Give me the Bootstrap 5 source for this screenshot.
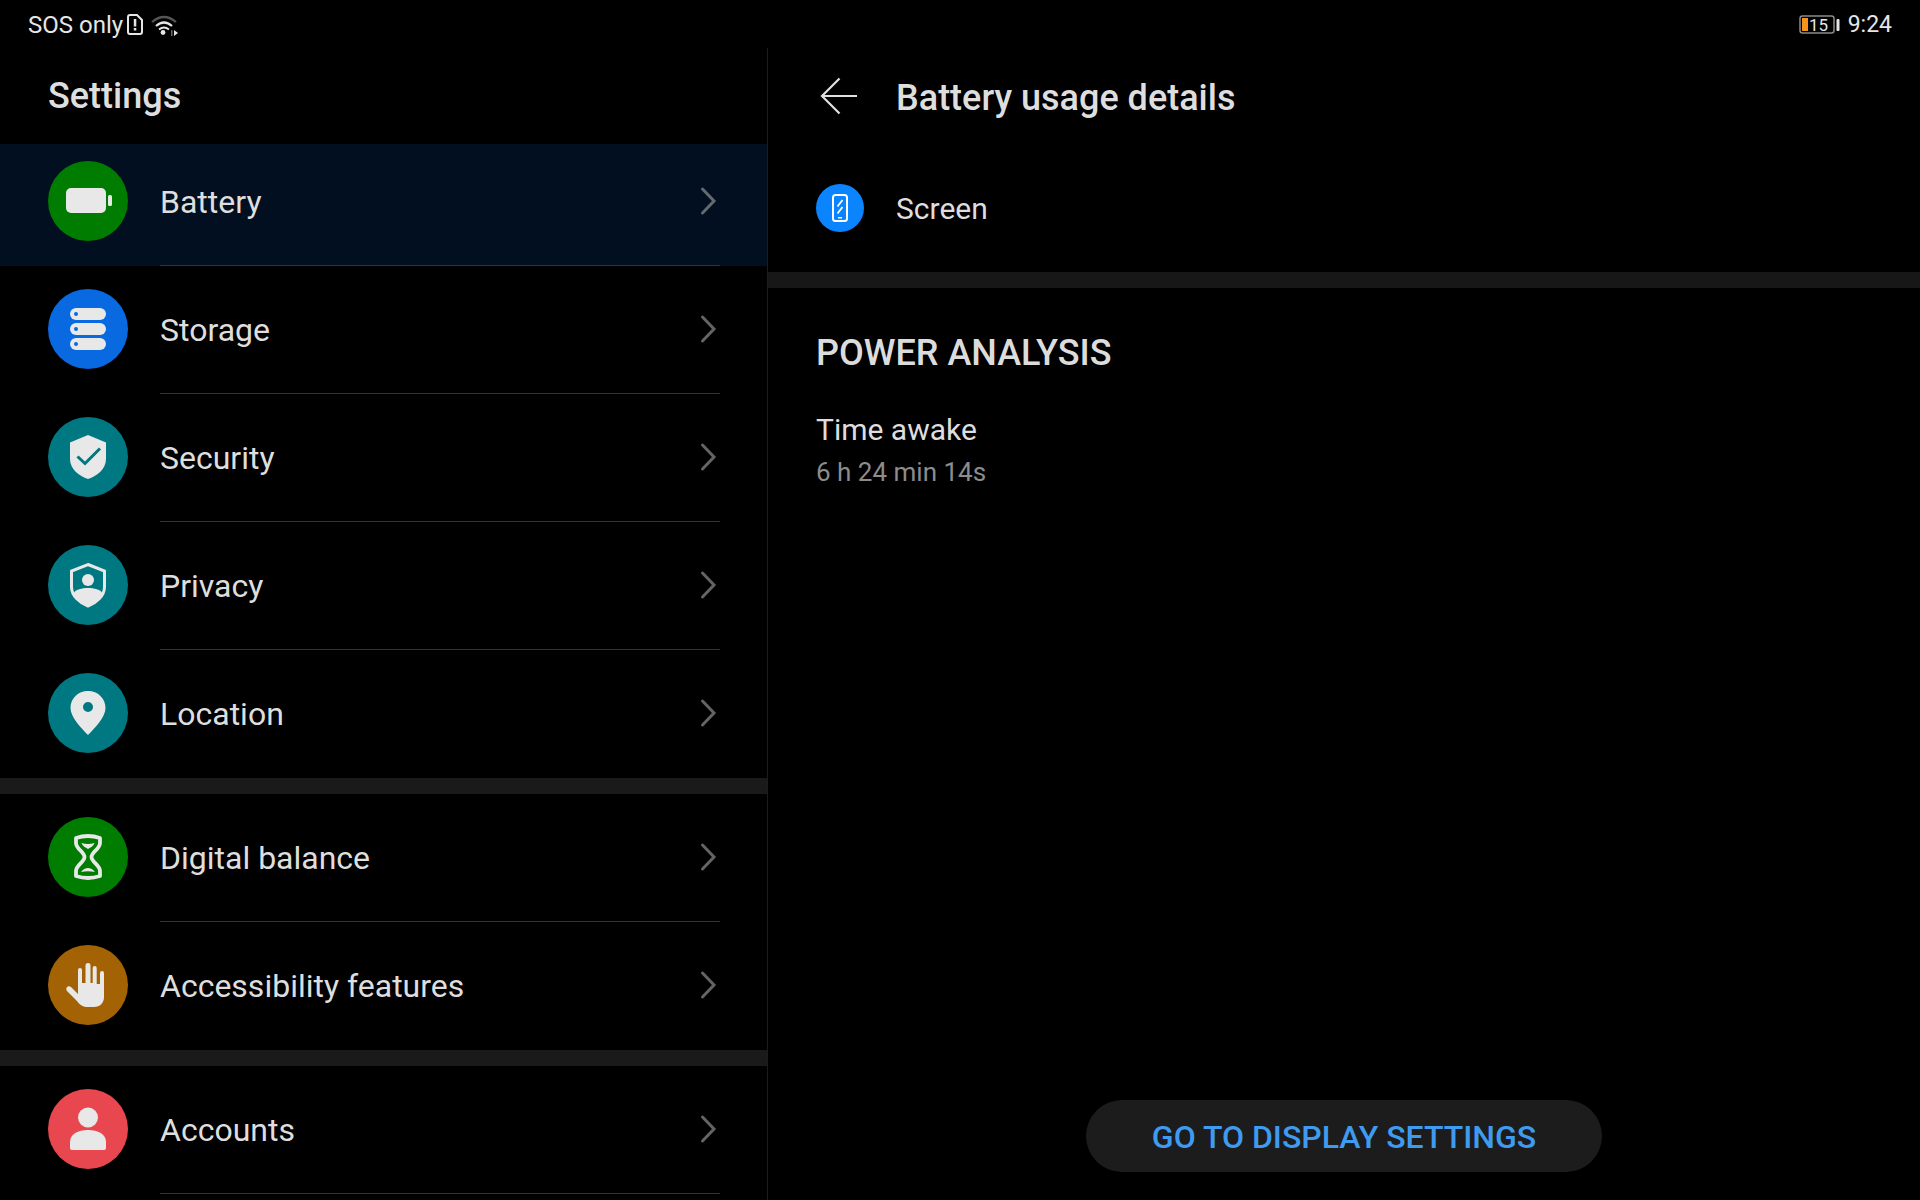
<!DOCTYPE html>
<html lang="en">
<head>
<meta charset="utf-8">
<title>Battery usage details</title>
<link rel="stylesheet" href="https://cdn.jsdelivr.net/npm/bootstrap@5.3.0/dist/css/bootstrap.min.css">
<style>
html,body{height:100%;background:#000;}
body{font-family:Roboto,"Liberation Sans",sans-serif;color:#dedede;overflow:hidden;}
.shell{height:1200px;width:1920px;}
.statusbar{height:48px;padding:2px 28px 0;font-size:24px;color:#e6e6e6;}
.sb-gap{gap:3px;}
.sb-wifi{margin-left:2px;}
.sb-time{font-size:23px;margin-left:7px;}
.panes{height:1152px;}
.leftpane{width:768px;border-right:1px solid #1c1c1c;overflow:hidden;}
.rightpane{width:1152px;}
.pane-title{height:96px;padding:0 48px 1px;font-size:36px;font-weight:500;color:#dedede;}
.setrow{height:128px;padding-left:48px;}
.setrow .disc{margin-bottom:2px;}
.setrow .chev{margin-bottom:2px;}
.setrow.active-row{background:#020f20;height:122px;}
.active-row .disc{margin-bottom:9px;}
.active-row .rowbody{padding-bottom:6px;}
.rowbody{height:100%;margin-left:32px;margin-right:47px;border-bottom:1px solid #333;font-size:32px;}
.rowbody.nodiv{border-bottom:0;}
.disc{width:80px;height:80px;border-radius:50%;flex:none;}
.sect-gap{height:16px;background:#1a1a1a;}
.sect-gap.dim{background:#171717;}
.c-green{background:#007d00;}
.c-blue{background:#0869e0;}
.c-teal{background:#007882;}
.c-amber{background:#a36304;}
.c-red{background:#e9474f;}
.detail-head{height:96px;padding-left:48px;}
.detail-title{font-size:36px;font-weight:500;margin-left:36px;margin-top:3px;}
.screen-row{height:128px;padding-left:48px;}
.screen-disc{width:48px;height:48px;border-radius:50%;background:#0a84ff;flex:none;}
.screen-label{font-size:30px;margin-left:32px;}
.pa-block{padding:45px 48px 0;}
.pa-title{font-size:36px;font-weight:500;line-height:41px;color:#dcdcdc;}
.pa-item{font-size:30px;line-height:36px;margin-top:38px;}
.pa-sub{font-size:26px;line-height:32px;color:#8c8c8c;margin-top:8px;}
.action-pill{width:516px;height:72px;border-radius:36px;background:#1c1c1c;color:#3f9bef;font-size:32px;font-weight:500;border:0;padding:1px 0 0;}
.action-wrap{padding-bottom:28px;}
</style>
</head>
<body>
<div class="shell d-flex flex-column">
  <div class="statusbar d-flex align-items-center justify-content-between">
    <div class="d-flex align-items-center sb-gap">
      <span>SOS only</span>
      <svg width="18" height="24" viewBox="0 1 18 24"><path d="M4 3h7l5 5v12a2 2 0 0 1-2 2H4a2 2 0 0 1-2-2V5a2 2 0 0 1 2-2z" fill="none" stroke="#e6e6e6" stroke-width="2"/><rect x="7.800" y="7" width="2.500" height="7.500" fill="#e6e6e6"/><rect x="7.800" y="16" width="2.500" height="2.500" fill="#e6e6e6"/></svg>
      <svg class="sb-wifi" width="30" height="24" viewBox="0 1 30 24"><path d="M3 10Q15 0 27 10" fill="none" stroke="#555" stroke-width="2.200"/><path d="M7 14Q15 7 23 14" fill="none" stroke="#e6e6e6" stroke-width="2.200"/><path d="M10 17.500Q15 13.500 20 17.500" fill="none" stroke="#e6e6e6" stroke-width="2"/><circle cx="14" cy="20.500" r="2.400" fill="#e6e6e6"/><path d="M25 18l4 3-4 3z" fill="#e6e6e6"/><rect x="22" y="18" width="1.500" height="6" fill="#666"/></svg>
    </div>
    <div class="d-flex align-items-center">
      <svg width="42" height="20" viewBox="0 0 42 20"><rect x="1" y="1" width="34" height="17" rx="2.500" fill="none" stroke="#8a8a8a" stroke-width="1.500"/><rect x="3" y="3" width="6" height="13" fill="#f7931a"/><text x="10" y="16" font-family="Roboto" font-size="17" fill="#e6e6e6">15</text><rect x="37.500" y="4" width="3" height="12" rx="1" fill="#e6e6e6"/></svg>
      <span class="sb-time">9:24</span>
    </div>
  </div>
  <div class="panes d-flex">
    <div class="leftpane">
      <div class="pane-title d-flex align-items-center">Settings</div>

      <div class="setrow active-row d-flex align-items-center">
        <div class="disc c-green d-flex align-items-center justify-content-center">
          <svg width="48" height="48" viewBox="0 0 48 48"><rect x="2" y="11" width="40" height="25" rx="5" fill="#e8e8e8"/><rect x="44" y="18" width="4" height="11" rx="1.500" fill="#e8e8e8"/></svg>
        </div>
        <div class="rowbody flex-grow-1 d-flex align-items-center justify-content-between"><span>Battery</span><svg class="chev" width="20" height="32" viewBox="0 0 20 32"><path d="M2.500 4L14 16 2.500 28" fill="none" stroke="#646b70" stroke-width="3" stroke-linecap="round"/></svg></div>
      </div>
      <div class="setrow d-flex align-items-center">
        <div class="disc c-blue d-flex align-items-center justify-content-center">
          <svg width="48" height="48" viewBox="0 0 48 48"><g fill="#e8e8e8"><rect x="6" y="3" width="36" height="12" rx="6"/><rect x="6" y="18" width="36" height="12" rx="6"/><rect x="6" y="33" width="36" height="12" rx="6"/></g><g fill="#0869e0"><circle cx="12" cy="9" r="2"/><circle cx="12" cy="24" r="2"/><circle cx="12" cy="39" r="2"/></g></svg>
        </div>
        <div class="rowbody flex-grow-1 d-flex align-items-center justify-content-between"><span>Storage</span><svg class="chev" width="20" height="32" viewBox="0 0 20 32"><path d="M2.500 4L14 16 2.500 28" fill="none" stroke="#646464" stroke-width="3" stroke-linecap="round"/></svg></div>
      </div>
      <div class="setrow d-flex align-items-center">
        <div class="disc c-teal d-flex align-items-center justify-content-center">
          <svg width="48" height="48" viewBox="0 0 48 48"><path d="M24 2L42 9.500V26C42 36 33 43 24 46 15 43 6 36 6 26V9.500z" fill="#e8e8e8"/><path d="M13.500 23.500L21 30.500 36 15.500" fill="none" stroke="#007882" stroke-width="3"/></svg>
        </div>
        <div class="rowbody flex-grow-1 d-flex align-items-center justify-content-between"><span>Security</span><svg class="chev" width="20" height="32" viewBox="0 0 20 32"><path d="M2.500 4L14 16 2.500 28" fill="none" stroke="#646464" stroke-width="3" stroke-linecap="round"/></svg></div>
      </div>
      <div class="setrow d-flex align-items-center">
        <div class="disc c-teal d-flex align-items-center justify-content-center">
          <svg width="48" height="48" viewBox="0 0 48 48"><path d="M24 3.500L40.500 10V26C40.500 35 32 42 24 45 16 42 7.500 35 7.500 26V10z" fill="none" stroke="#e8e8e8" stroke-width="3"/><circle cx="24" cy="19" r="6" fill="#e8e8e8"/><path d="M9 34C10 29 16 27 24 27S38 29 39 34C36 40 30 43 24 45 18 43 12 40 9 34z" fill="#e8e8e8"/></svg>
        </div>
        <div class="rowbody flex-grow-1 d-flex align-items-center justify-content-between"><span>Privacy</span><svg class="chev" width="20" height="32" viewBox="0 0 20 32"><path d="M2.500 4L14 16 2.500 28" fill="none" stroke="#646464" stroke-width="3" stroke-linecap="round"/></svg></div>
      </div>
      <div class="setrow d-flex align-items-center">
        <div class="disc c-teal d-flex align-items-center justify-content-center">
          <svg width="48" height="48" viewBox="0 0 48 48"><path fill-rule="evenodd" d="M24 2C34 2 41.500 9.500 41.500 19 41.500 28 31 39 24 46 17 39 6.500 28 6.500 19 6.500 9.500 14 2 24 2zm0 11a5 5 0 1 0 0 10 5 5 0 0 0 0-10z" fill="#e8e8e8"/></svg>
        </div>
        <div class="rowbody nodiv flex-grow-1 d-flex align-items-center justify-content-between"><span>Location</span><svg class="chev" width="20" height="32" viewBox="0 0 20 32"><path d="M2.500 4L14 16 2.500 28" fill="none" stroke="#646464" stroke-width="3" stroke-linecap="round"/></svg></div>
      </div>
      <div class="sect-gap"></div>
      <div class="setrow d-flex align-items-center">
        <div class="disc c-green d-flex align-items-center justify-content-center">
          <svg width="48" height="48" viewBox="0 0 48 48"><path d="M12 5Q24 1 36 5V10C36 16 27.500 19 27.500 24 27.500 29 36 32 36 38V43Q24 47 12 43V38C12 32 20.500 29 20.500 24 20.500 19 12 16 12 10z" fill="none" stroke="#e8e8e8" stroke-width="3.800" stroke-linejoin="round"/><path d="M17.500 10Q24 12 30.500 10C29.500 13 27 14.500 24 16 21 14.500 18.500 13 17.500 10zM17 39C19 36.500 21.500 35 24 35S29 36.500 31 39Q24 37.500 17 39z" fill="#e8e8e8"/></svg>
        </div>
        <div class="rowbody flex-grow-1 d-flex align-items-center justify-content-between"><span>Digital balance</span><svg class="chev" width="20" height="32" viewBox="0 0 20 32"><path d="M2.500 4L14 16 2.500 28" fill="none" stroke="#646464" stroke-width="3" stroke-linecap="round"/></svg></div>
      </div>
      <div class="setrow d-flex align-items-center">
        <div class="disc c-amber d-flex align-items-center justify-content-center">
          <svg width="48" height="48" viewBox="0 0 48 48"><path d="M14 33V9a2 2 0 0 1 4 0V22H21.500V4.500a2.500 2.500 0 0 1 5 0V22H28.700V7a2 2 0 0 1 4 0V23H36V12a2 2 0 0 1 4 0V36c0 6-4 10-10 10h-6c-5 0-8-2-11-6L3 30c-2-3 1-6 4-4z" fill="#e8e8e8"/></svg>
        </div>
        <div class="rowbody nodiv flex-grow-1 d-flex align-items-center justify-content-between"><span>Accessibility features</span><svg class="chev" width="20" height="32" viewBox="0 0 20 32"><path d="M2.500 4L14 16 2.500 28" fill="none" stroke="#646464" stroke-width="3" stroke-linecap="round"/></svg></div>
      </div>
      <div class="sect-gap"></div>
      <div class="setrow d-flex align-items-center">
        <div class="disc c-red d-flex align-items-center justify-content-center">
          <svg width="48" height="48" viewBox="0 0 48 48"><circle cx="24" cy="12.500" r="10" fill="#e8e8e8"/><path d="M6 37C6 29 14 25 24 25S42 29 42 37V43a2 2 0 0 1-2 2H8a2 2 0 0 1-2-2z" fill="#e8e8e8"/></svg>
        </div>
        <div class="rowbody flex-grow-1 d-flex align-items-center justify-content-between"><span>Accounts</span><svg class="chev" width="20" height="32" viewBox="0 0 20 32"><path d="M2.500 4L14 16 2.500 28" fill="none" stroke="#646464" stroke-width="3" stroke-linecap="round"/></svg></div>
      </div>
    </div>

    <div class="rightpane d-flex flex-column">
      <div class="detail-head d-flex align-items-center">
        <svg width="44" height="44" viewBox="0 0 44 44"><path d="M41 22H7M23.500 4.500L6 22l17.500 17.500" fill="none" stroke="#e0e0e0" stroke-width="2.200"/></svg>
        <span class="detail-title">Battery usage details</span>
      </div>
      <div class="screen-row d-flex align-items-center">
        <div class="screen-disc d-flex align-items-center justify-content-center">
          <svg width="16" height="28" viewBox="0 0 16 28"><rect x="1" y="1" width="14" height="26" rx="2.500" fill="none" stroke="#fff" stroke-width="2"/><path d="M10.500 6L5.500 12.500M10.500 13L5.500 19.500" stroke="#fff" stroke-width="1.800"/><rect x="6" y="23" width="4" height="1.500" fill="#fff"/></svg>
        </div>
        <span class="screen-label">Screen</span>
      </div>
      <div class="sect-gap dim"></div>
      <div class="pa-block">
        <div class="pa-title">POWER ANALYSIS</div>
        <div class="pa-item">Time awake</div>
        <div class="pa-sub">6 h 24 min 14s</div>
      </div>
      <div class="action-wrap mt-auto d-flex justify-content-center">
        <button type="button" class="btn action-pill">GO TO DISPLAY SETTINGS</button>
      </div>
    </div>
  </div>
</div>
<script src="https://cdn.jsdelivr.net/npm/bootstrap@5.3.0/dist/js/bootstrap.bundle.min.js"></script>
</body>
</html>
